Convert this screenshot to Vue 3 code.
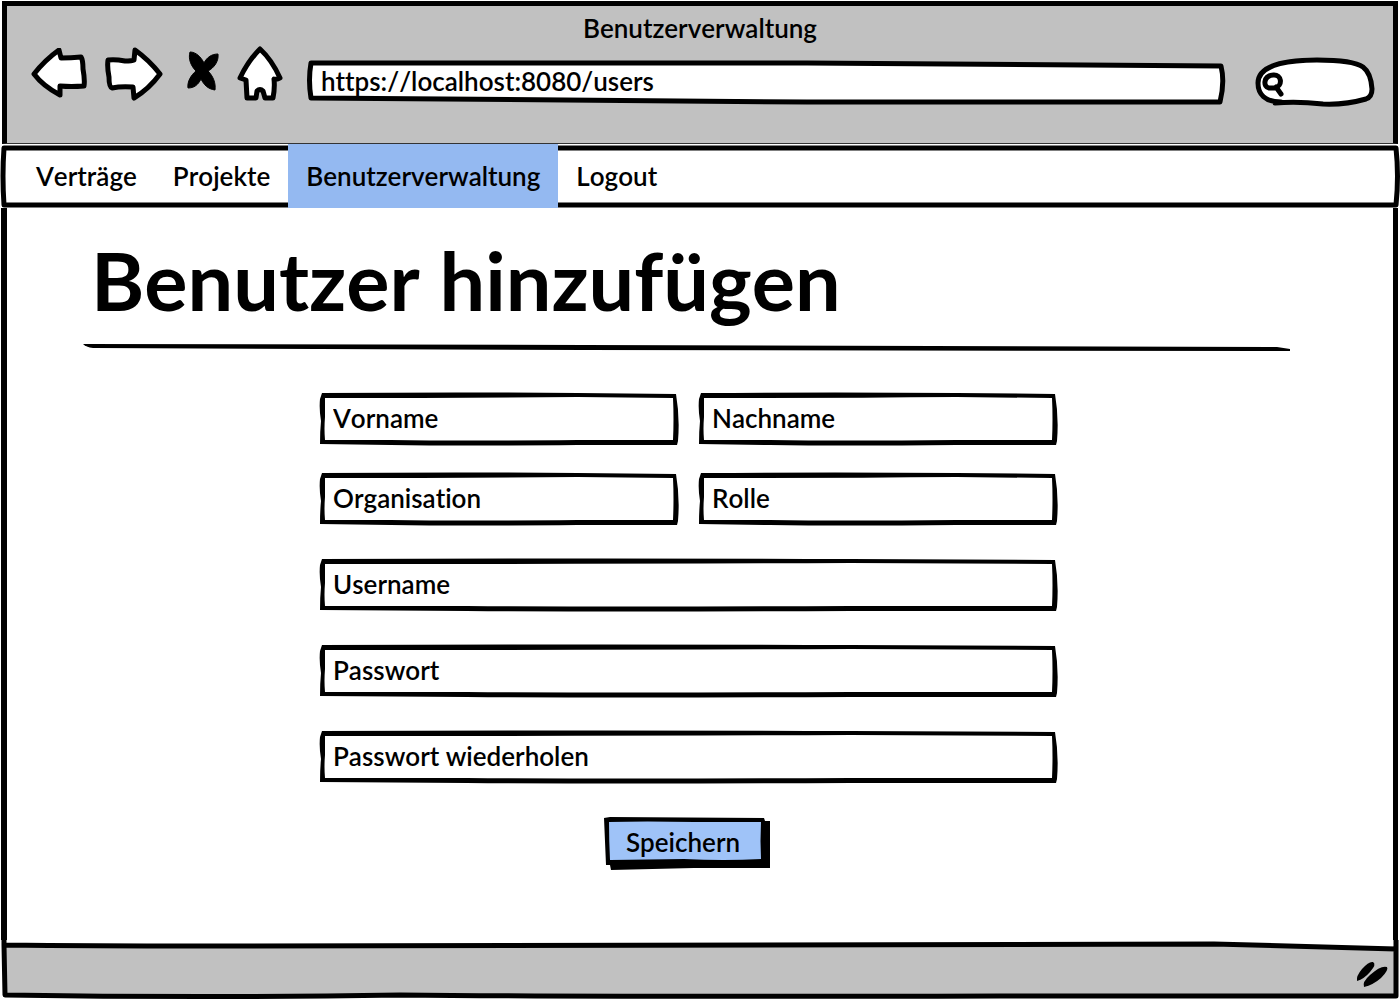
<script setup>
const navItems = [
  { label: 'Verträge', active: false },
  { label: 'Projekte', active: false },
  { label: 'Benutzerverwaltung', active: true },
  { label: 'Logout', active: false },
]

const fields = [
  { id: 'vorname', label: 'Vorname', type: 'text', width: 359 },
  { id: 'nachname', label: 'Nachname', type: 'text', width: 359 },
  { id: 'organisation', label: 'Organisation', type: 'text', width: 359 },
  { id: 'rolle', label: 'Rolle', type: 'text', width: 359 },
  { id: 'username', label: 'Username', type: 'text', width: 738 },
  { id: 'passwort', label: 'Passwort', type: 'password', width: 738 },
  { id: 'passwort2', label: 'Passwort wiederholen', type: 'password', width: 738 },
]

// Hand-drawn box outline: an uneven outer edge with an inner edge cut out of it.
function sketchBox(w) {
  const near = w * 0.4
  const far = w * 0.72
  return [
    `M3 0 Q${near} -1 ${far} 0 L${w - 2} 1 Q${w + 2} 24 ${w} 48 L${w - 1} 52 L${w - 6} 52`,
    `L${far} 52 Q${near} 53 ${w * 0.2} 52 L1 51 Q1 38 2 28 Q0 16 1 6 Z`,
    `M6 5 Q6 14 6 24 Q5 36 6 47 L${w * 0.2} 47 Q${near} 48 ${far} 47 L${w - 5} 47 Q${w - 4} 26 ${w - 5} 5 L${far} 4 Q${near} 5 6 5 Z`,
  ].join(' ')
}
</script>

<template>
  <div class="browser">
    <header class="chrome">
      <div class="window-title">Benutzerverwaltung</div>
      <div class="toolbar">
        <button class="tool back" type="button" aria-label="Zurück">
          <svg width="56" height="52" viewBox="0 0 56 52"><path d="M3 26 Q14 12 28 2 L30 10 Q40 10 50 9 Q52 12 52 21 Q54 32 53 38 Q40 39 29 38 L29 47 Q12 38 3 26 Z" /></svg>
        </button>
        <button class="tool forward" type="button" aria-label="Vor">
          <svg width="58" height="54" viewBox="0 0 58 54"><path d="M3 13 Q10 12 20 14 Q27 14 29 13 L30 3 Q44 13 55 27 Q44 42 29 51 L28 40 Q16 39 7 41 Q4 40 4 30 Q2 20 3 13 Z" /></svg>
        </button>
        <button class="tool stop" type="button" aria-label="Abbrechen">
          <svg width="32" height="40" viewBox="0 0 32 40"><path class="solid" d="M3 1 C9 1 14 6 17 12 C20 6 25 3 31 3 C32 10 27 17 21 20 C26 25 29 32 28 39 C21 38 17 34 14 28 C11 34 7 37 1 37 C0 31 4 24 9 20 C4 15 1 8 3 1 Z" /></svg>
        </button>
        <button class="tool home" type="button" aria-label="Startseite">
          <svg width="46" height="56" viewBox="0 0 46 56"><path d="M23 3 Q35 14 43 32 Q40 34 37 33 Q38 42 36 52 L28 52 L26 45 Q23 42 20 45 L19 52 L10 52 L9 34 L3 32 Q11 15 23 3 Z" /></svg>
        </button>
        <div class="address">
          <svg class="sketch" viewBox="0 0 918 44" preserveAspectRatio="none" aria-hidden="true"><path class="outline" d="M4 3 L500 3 L914 6 Q918 22 913 42 L500 42 L4 38 Q1 20 4 3 Z" /></svg>
          <input type="text" aria-label="Adresse" value="https://localhost:8080/users" />
        </div>
        <div class="search">
          <svg class="sketch" viewBox="0 0 120 50" preserveAspectRatio="none" aria-hidden="true">
            <path class="outline" d="M26 45 C10 45 3 37 3 26 C3 5 42 3 62 3 Q98 3 108 10 Q116 16 117 32 Q117 40 111 42 Q90 48 68 47 Q42 44 20 46" />
            <path class="lens" d="M18 18 C8 19 8 30 14 31 L20 31 C28 29 27 17 18 18 M21 30 L26 37" />
          </svg>
          <input type="search" aria-label="Suche" />
        </div>
      </div>
    </header>

    <nav class="menu">
      <svg class="sketch" viewBox="0 0 1400 64" preserveAspectRatio="none" aria-hidden="true"><path class="outline" d="M4 4 L1396 4 Q1399 32 1396 61 L4 61 Q2 32 4 4 Z" /></svg>
      <a v-for="item in navItems" :key="item.label" href="#" :class="{ active: item.active }">{{ item.label }}</a>
    </nav>

    <main class="page">
      <h1>Benutzer hinzufügen</h1>
      <svg class="rule" viewBox="0 0 1210 8" preserveAspectRatio="none" aria-hidden="true"><path d="M0 0 L500 1 L1194 3 L1207 5 L1207 7 L1190 7 L500 6 L10 4 Q3 3 0 0 Z" /></svg>

      <form class="form" @submit.prevent>
        <div v-for="field in fields" :key="field.id" class="field" :class="{ wide: field.width > 400 }">
          <svg class="sketch" :viewBox="`0 0 ${field.width} 52`" preserveAspectRatio="none" aria-hidden="true"><path fill-rule="evenodd" :d="sketchBox(field.width)" /></svg>
          <input :id="field.id" :type="field.type" :placeholder="field.label" :aria-label="field.label" />
        </div>
        <button class="save" type="submit">
          <svg class="sketch" viewBox="0 0 168 54" preserveAspectRatio="none" aria-hidden="true">
            <path d="M0 1 L6 0 L160 1 L161 4 L166 4 L166 51 L90 51 L7 53 L6 48 L2 48 Z" />
            <path class="face" d="M5 5 Q40 4 90 5 L157 5 Q156 24 157 42 Q120 44 80 42 L6 43 Q5 24 5 5 Z" />
          </svg>
          <span>Speichern</span>
        </button>
      </form>
    </main>

    <footer class="status">
      <svg class="sketch" viewBox="0 0 1400 60" preserveAspectRatio="none" aria-hidden="true">
        <path class="bar" d="M4 5 Q90 6 200 6 Q600 3 1214 4 L1396 9 L1396 56 L1000 56 Q600 57 400 55 Q200 58 5 55 Z M4 0 L4 5 M1396 0 L1396 9" />
      </svg>
      <svg class="grip" width="34" height="28" viewBox="0 0 34 28" aria-hidden="true"><path d="M1 21 Q0 16 6 9 Q13 1 17 2 Q21 4 14 12 Q8 19 1 21 Z M8 27 Q6 22 14 15 Q25 5 31 7 Q33 10 25 18 Q17 25 8 27 Z" /></svg>
    </footer>
  </div>
</template>

<style>
body {
  margin: 0;
}
</style>

<style scoped>
.browser {
  display: flex;
  flex-direction: column;
  min-height: 100vh;
  background: #fff;
  color: #000;
  font-family: Lato, "Noto Sans", sans-serif;
  font-size: 26px;
  font-weight: 600;
  font-kerning: none;
  font-variant-ligatures: none;
  line-height: 32px;
}

.browser * {
  box-sizing: border-box;
}

.sketch {
  position: absolute;
  inset: 0;
  width: 100%;
  height: 100%;
  overflow: visible;
  pointer-events: none;
}

.outline {
  fill: #fff;
  stroke: #000;
  stroke-width: 5px;
  stroke-linejoin: round;
  stroke-linecap: round;
}

input {
  position: relative;
  display: block;
  width: 100%;
  height: 100%;
  padding: 0 14px 2px;
  border: 0;
  outline: 0;
  background: transparent;
  color: inherit;
  font: inherit;
  font-kerning: none;
  font-variant-ligatures: none;
}

input::placeholder {
  color: inherit;
  opacity: 1;
}

.chrome {
  height: 143px;
  margin: 1px 2px 0;
  padding: 6px 18px 0;
  border: 5px solid #000;
  border-bottom: 1px solid #333;
  background: #c1c1c1;
}

.window-title {
  text-align: center;
}

.toolbar {
  display: flex;
  align-items: center;
  height: 60px;
  padding-left: 6px;
}

.tool {
  display: flex;
  flex: none;
  padding: 0;
  border: 0;
  background: none;
}

.tool path {
  fill: #fff;
  stroke: #000;
  stroke-width: 5px;
  stroke-linejoin: round;
}

.tool .solid {
  fill: #000;
  stroke-width: 1px;
}

.forward {
  margin-left: 18px;
}

.stop {
  margin-left: 24px;
}

.stop svg {
  margin-bottom: 6px;
}

.home {
  margin-left: 18px;
}

.address {
  position: relative;
  flex: 1;
  height: 44px;
  margin: 16px 30px 0 24px;
}

.search {
  position: relative;
  flex: none;
  width: 120px;
  height: 50px;
  margin-top: 16px;
}

.search input {
  padding-left: 34px;
  appearance: none;
}

.lens {
  fill: none;
  stroke: #000;
  stroke-width: 5px;
  stroke-linecap: round;
}

.menu {
  position: relative;
  display: flex;
  height: 64px;
  padding-left: 18px;
}

.menu a {
  position: relative;
  padding: 16px 18px;
  color: inherit;
  text-decoration: none;
}

.menu .active {
  background: #94b9f1;
}

.page {
  flex: 1;
  margin: 0 2px 0 1px;
  padding: 32px 100px 0 76px;
  border-right: 5px solid #000;
  border-left: 6px solid #000;
}

h1 {
  margin: 0;
  padding-left: 8px;
  font-size: 81px;
  font-weight: 700;
  line-height: 80px;
}

.rule {
  display: block;
  width: 100%;
  height: 8px;
  margin-top: 24px;
}

.form {
  display: grid;
  grid-template-columns: 1fr 1fr;
  gap: 28px 20px;
  max-width: 738px;
  margin: 41px auto 0;
}

.field {
  position: relative;
  height: 52px;
}

.wide {
  grid-column: 1 / -1;
  margin-top: 6px;
}

.save {
  position: relative;
  grid-column: 1 / -1;
  justify-self: center;
  width: 168px;
  height: 54px;
  margin-top: 6px;
  padding: 0 10px 4px 0;
  border: 0;
  background: none;
  color: inherit;
  font: inherit;
}

.save span {
  position: relative;
}

.face {
  fill: #9fc3f8;
}

.status {
  position: relative;
  display: flex;
  align-items: center;
  justify-content: flex-end;
  height: 60px;
  padding: 8px 10px 0;
}

.bar {
  fill: #c1c1c1;
  stroke: #000;
  stroke-width: 5px;
  stroke-linejoin: round;
}

.grip {
  position: relative;
}
</style>
